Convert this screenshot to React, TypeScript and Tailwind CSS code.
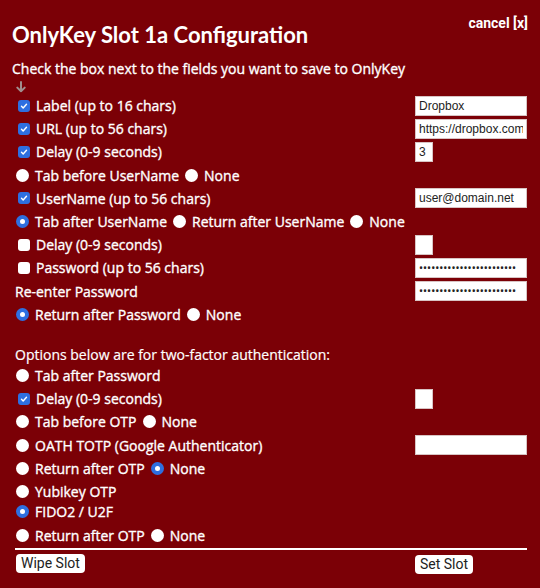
import type { ReactNode } from 'react';

const BODY = { fontFamily: '"Open Sans", "DejaVu Sans", sans-serif' };
const UI = { fontFamily: 'Roboto, "Liberation Sans", Arial, sans-serif' };
const INPUT = { fontFamily: '"Liberation Sans", Arial, sans-serif' };

function Check({ on }: { on?: boolean }) {
  return (
    <span
      className={
        'ml-[2px] inline-flex h-[12px] w-[12px] shrink-0 items-center justify-center rounded-[3px] ' +
        (on ? 'bg-[#2e6fe0]' : 'bg-white')
      }
    >
      {on && (
        <svg viewBox="0 0 12 12" className="h-[10px] w-[10px]">
          <path d="M3 6.3 L5 8.3 L9 3.8" fill="none" stroke="white" strokeWidth="1.7" strokeLinecap="round" strokeLinejoin="round" />
        </svg>
      )}
    </span>
  );
}

function Radio({ on }: { on?: boolean }) {
  return (
    <span
      className={
        'inline-flex h-[13px] w-[13px] shrink-0 items-center justify-center rounded-full ' +
        (on ? 'bg-[#2e6fe0]' : 'bg-white')
      }
    >
      {on && <span className="h-[5px] w-[5px] rounded-full bg-white" />}
    </span>
  );
}

function Row({ children, right, className = 'h-[23.2px]' }: { children: ReactNode; right?: ReactNode; className?: string }) {
  return (
    <div className={'flex items-center justify-between pl-[16px] pr-[13px] ' + className}>
      <div className="flex items-center gap-[6px] text-[14px] font-medium [-webkit-text-stroke:0.35px_white]">{children}</div>
      {right}
    </div>
  );
}

function Field({ value, type = 'text', small }: { value: string; type?: string; small?: boolean }) {
  return (
    <div className="w-[112px]">
      <input
        readOnly
        type={type}
        value={value}
        style={type === 'password' ? UI : INPUT}
        className={
          'block h-[20px] border border-[#d8c4c4] bg-white px-[3px] text-[12px] text-[#222] outline-none ' +
          (small ? 'w-[18px]' : 'w-[112px]')
        }
      />
    </div>
  );
}

const PW = 'passwordpassword12345678';

export default function App() {
  return (
    <div className="min-h-[588px] bg-[#7b0006] text-white" style={BODY}>
      {/* header */}
      <div className="flex items-start justify-between pt-[14px] pr-[12px] pl-[12px]">
        <h1
          className="mt-[8px] text-[22px] leading-[26px] font-bold"
          style={{ fontFamily: 'Lato, "Open Sans", sans-serif' }}
        >
          OnlyKey Slot 1a Configuration
        </h1>
        <span className="text-[14px] leading-[18px] font-bold" style={UI}>cancel [x]</span>
      </div>
      <p className="mt-[11px] pl-[12px] text-[14px] leading-[20px] font-medium [-webkit-text-stroke:0.35px_white]">
        Check the box next to the fields you want to save to OnlyKey
      </p>
      <div className="flex h-[15px] items-center pl-[16px]">
        <svg viewBox="0 0 10 12" className="h-[12px] w-[10px]">
          <path d="M5 1 V10.3 M1.3 6.6 L5 10.3 L8.7 6.6" fill="none" stroke="#a08e8e" strokeWidth="2" strokeLinecap="round" strokeLinejoin="round" />
        </svg>
      </div>

      <Row right={<Field value="Dropbox" />}>
        <Check on />
        <span>Label (up to 16 chars)</span>
      </Row>
      <Row right={<Field value="https://dropbox.com/login" />}>
        <Check on />
        <span>URL (up to 56 chars)</span>
      </Row>
      <Row right={<Field value="3" small />}>
        <Check on />
        <span>Delay (0-9 seconds)</span>
      </Row>
      <Row>
        <Radio />
        <span>Tab before UserName</span>
        <Radio />
        <span>None</span>
      </Row>
      <Row right={<Field value="user@domain.net" />}>
        <Check on />
        <span>UserName (up to 56 chars)</span>
      </Row>
      <Row>
        <Radio on />
        <span>Tab after UserName</span>
        <Radio />
        <span>Return after UserName</span>
        <Radio />
        <span>None</span>
      </Row>
      <Row right={<Field value="" small />}>
        <Check />
        <span>Delay (0-9 seconds)</span>
      </Row>
      <Row right={<Field value={PW} type="password" />}>
        <Check />
        <span>Password (up to 56 chars)</span>
      </Row>
      <Row right={<Field value={PW} type="password" />}>
        <span className="-ml-[1px]">Re-enter Password</span>
      </Row>
      <Row>
        <Radio on />
        <span>Return after Password</span>
        <Radio />
        <span>None</span>
      </Row>

      <p className="mt-[20px] pl-[15px] text-[14px] leading-[18px] [-webkit-text-stroke:0.2px_white]">
        Options below are for two-factor authentication:
      </p>
      <Row>
        <Radio />
        <span>Tab after Password</span>
      </Row>
      <Row right={<Field value="" small />}>
        <Check on />
        <span>Delay (0-9 seconds)</span>
      </Row>
      <Row>
        <Radio />
        <span>Tab before OTP</span>
        <Radio />
        <span>None</span>
      </Row>
      <Row right={<Field value="" />}>
        <Radio />
        <span>OATH TOTP (Google Authenticator)</span>
      </Row>
      <Row>
        <Radio />
        <span>Return after OTP</span>
        <Radio on />
        <span>None</span>
      </Row>
      <Row className="mt-[2px] h-[20px]">
        <Radio />
        <span>Yubikey OTP</span>
      </Row>
      <Row className="h-[20px]">
        <Radio on />
        <span>FIDO2 / U2F</span>
      </Row>
      <Row className="mt-[2px] h-[23px]">
        <Radio />
        <span>Return after OTP</span>
        <Radio />
        <span>None</span>
      </Row>

      <div className="mt-[1px] mr-[13px] ml-[15px] h-[2px] bg-white" />
      <div className="flex items-center justify-between pt-[2px] pr-[13px] pl-[16px]" style={UI}>
        <button className="h-[19px] rounded-[4px] bg-white px-[5px] text-[14px] leading-[19px] text-[#222]">Wipe Slot</button>
        <div className="w-[112px]">
          <button className="h-[19px] rounded-[4px] bg-white px-[5px] text-[14px] leading-[19px] text-[#222]">Set Slot</button>
        </div>
      </div>
    </div>
  );
}
